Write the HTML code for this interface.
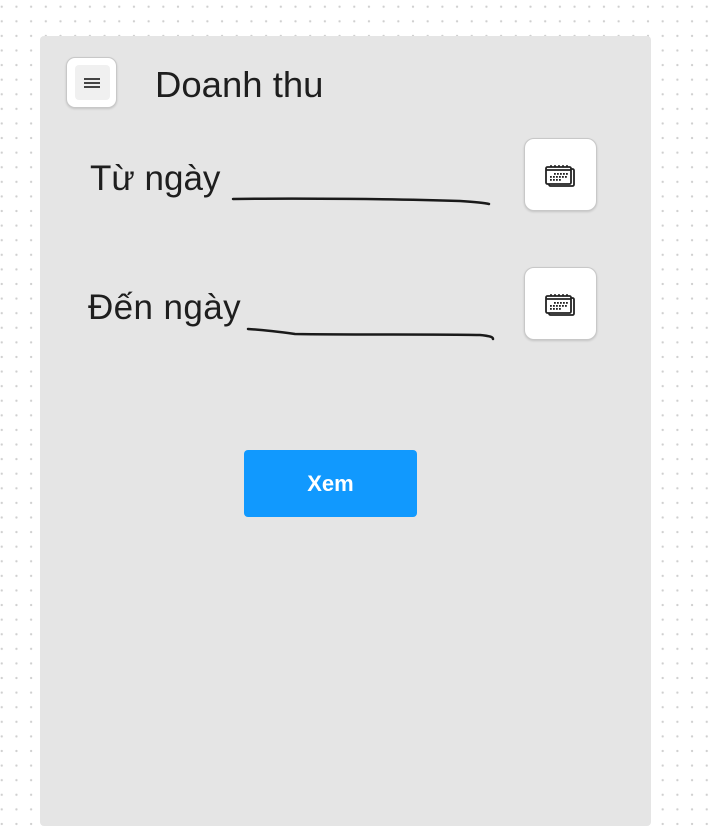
<!DOCTYPE html>
<html><head><meta charset="utf-8"><style>
html,body{margin:0;padding:0}
body{width:713px;height:810px;position:relative;overflow:hidden;background:#fff;
background-image:radial-gradient(circle,#cfcfcf 1px,transparent 1.3px);background-size:14.7px 14.6px;background-position:-5.6px -0.6px;
font-family:"Liberation Sans","DejaVu Sans",sans-serif;color:#1e1e1e}
.panel{position:absolute;left:40px;top:36px;width:611px;height:790px;background:#e5e5e5;border-radius:4px}
.menu{position:absolute;left:66px;top:57px;width:51px;height:51px;background:#fff;border:1px solid #c8c8c8;border-radius:9px;box-sizing:border-box;box-shadow:0 1px 2px rgba(0,0,0,.15)}
.menu .in{position:absolute;left:8px;top:7px;width:35px;height:35px;background:#f0f0f0;border-radius:4px}
.menu i{position:absolute;left:17px;width:16px;height:1.5px;background:#444}
.t{position:absolute;font-size:35px;line-height:1;white-space:nowrap}
.cal{position:absolute;left:524px;width:73px;height:73px;background:#fff;border:1px solid #c8c8c8;border-radius:10px;box-sizing:border-box;box-shadow:0 1px 2px rgba(0,0,0,.15)}
.cal svg{position:absolute;left:20px;top:24px}
.btn{position:absolute;left:244px;top:450px;width:173px;height:67px;background:#1199fe;border-radius:4px;color:#fff;font-weight:bold;font-size:22px;text-align:center;line-height:67px}
</style></head><body>
<div class="panel"></div>
<div class="menu"><div class="in"></div><i style="top:20px"></i><i style="top:24px"></i><i style="top:28px"></i></div>
<div class="t" style="left:155px;top:67px;font-size:36.5px">Doanh thu</div>
<div class="t" style="left:90px;top:161px">Từ ngày</div>
<div class="t" style="left:88px;top:290px;letter-spacing:0.4px">Đến ngày</div>
<svg style="position:absolute;left:0;top:0" width="713" height="810"><path d="M233 199 C300 198 400 199 460 201 C475 202 485 203 489 204" stroke="#1a1a1a" stroke-width="2.5" fill="none" stroke-linecap="round"/><path d="M248 329 C265 330 280 332 295 334 C360 335 430 334 480 335 C490 336 493 337 493 339" stroke="#1a1a1a" stroke-width="2.5" fill="none" stroke-linecap="round"/></svg>
<div class="cal" style="top:138px"><svg width="32" height="26" viewBox="0 0 32 24"><rect x="4" y="5" width="25" height="17" rx="1.5" fill="#fff" stroke="#222" stroke-width="1.8"/><rect x="1" y="3" width="25" height="17" rx="1.5" fill="#fff" stroke="#222" stroke-width="1.8"/><path d="M1 6h25" stroke="#222" stroke-width="1.8"/><g fill="#222"><circle cx="6" cy="2" r="1"/><circle cx="10" cy="2" r="1"/><circle cx="14" cy="2" r="1"/><circle cx="18" cy="2" r="1"/><circle cx="22" cy="2" r="1"/></g><g fill="#222"><rect x="9" y="9" width="1.8" height="1.8"/><rect x="12" y="9" width="1.8" height="1.8"/><rect x="15" y="9" width="1.8" height="1.8"/><rect x="18" y="9" width="1.8" height="1.8"/><rect x="21" y="9" width="1.8" height="1.8"/><rect x="5" y="12" width="1.8" height="1.8"/><rect x="8" y="12" width="1.8" height="1.8"/><rect x="11" y="12" width="1.8" height="1.8"/><rect x="14" y="12" width="1.8" height="1.8"/><rect x="17" y="12" width="1.8" height="1.8"/><rect x="20" y="12" width="1.8" height="1.8"/><rect x="5" y="15" width="1.8" height="1.8"/><rect x="8" y="15" width="1.8" height="1.8"/><rect x="11" y="15" width="1.8" height="1.8"/><rect x="14" y="15" width="1.8" height="1.8"/></g></svg></div>
<div class="cal" style="top:267px"><svg width="32" height="26" viewBox="0 0 32 24"><rect x="4" y="5" width="25" height="17" rx="1.5" fill="#fff" stroke="#222" stroke-width="1.8"/><rect x="1" y="3" width="25" height="17" rx="1.5" fill="#fff" stroke="#222" stroke-width="1.8"/><path d="M1 6h25" stroke="#222" stroke-width="1.8"/><g fill="#222"><circle cx="6" cy="2" r="1"/><circle cx="10" cy="2" r="1"/><circle cx="14" cy="2" r="1"/><circle cx="18" cy="2" r="1"/><circle cx="22" cy="2" r="1"/></g><g fill="#222"><rect x="9" y="9" width="1.8" height="1.8"/><rect x="12" y="9" width="1.8" height="1.8"/><rect x="15" y="9" width="1.8" height="1.8"/><rect x="18" y="9" width="1.8" height="1.8"/><rect x="21" y="9" width="1.8" height="1.8"/><rect x="5" y="12" width="1.8" height="1.8"/><rect x="8" y="12" width="1.8" height="1.8"/><rect x="11" y="12" width="1.8" height="1.8"/><rect x="14" y="12" width="1.8" height="1.8"/><rect x="17" y="12" width="1.8" height="1.8"/><rect x="20" y="12" width="1.8" height="1.8"/><rect x="5" y="15" width="1.8" height="1.8"/><rect x="8" y="15" width="1.8" height="1.8"/><rect x="11" y="15" width="1.8" height="1.8"/><rect x="14" y="15" width="1.8" height="1.8"/></g></svg></div>
<div class="btn">Xem</div>
</body></html>
